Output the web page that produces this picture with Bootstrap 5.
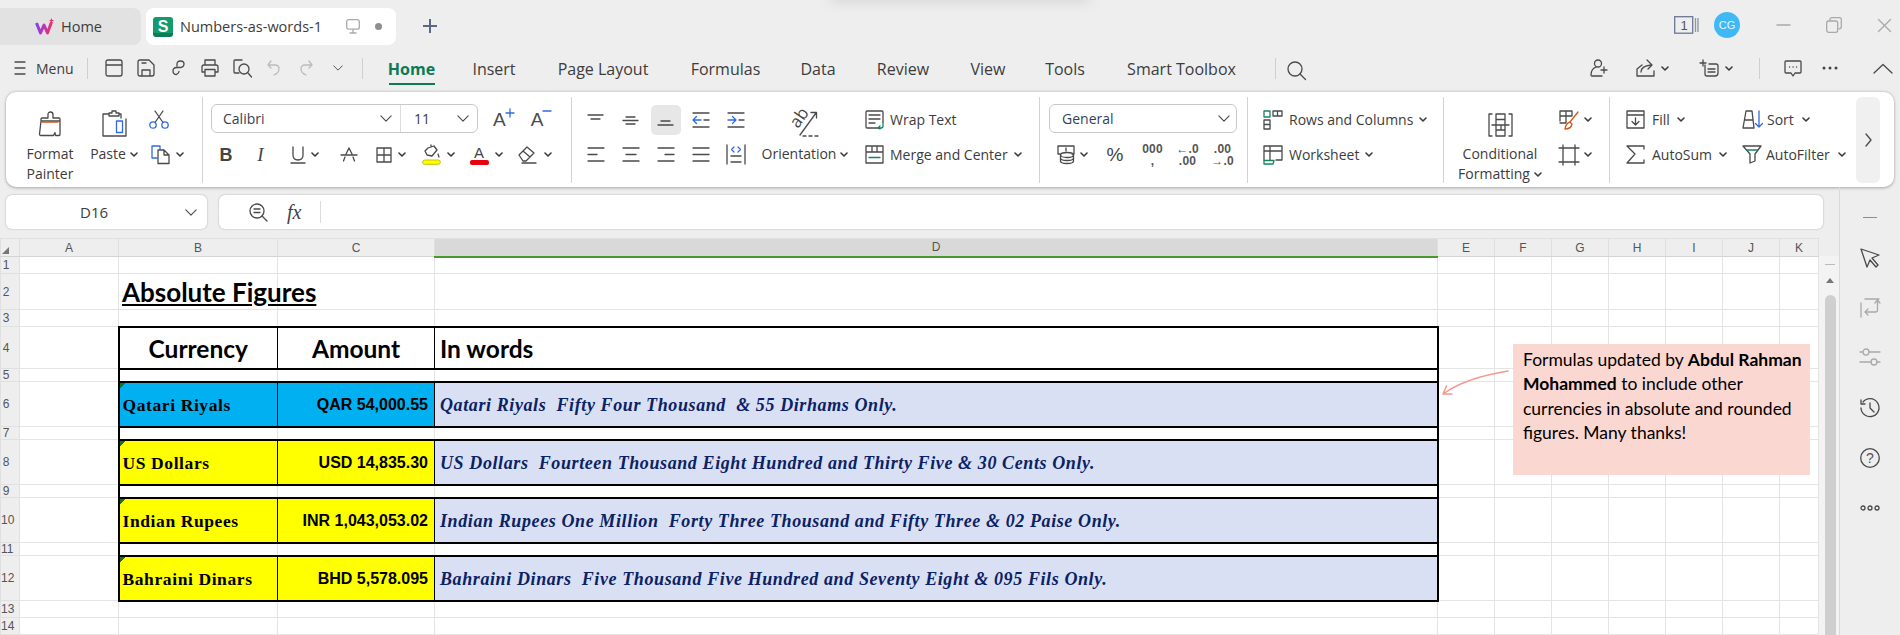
<!DOCTYPE html>
<html lang="en">
<head>
<meta charset="UTF-8">
<title>Numbers-as-words-1</title>
<meta name="viewport" content="width=device-width, initial-scale=1">
<link rel="stylesheet" href="https://cdn.jsdelivr.net/npm/bootstrap@5.3.0/dist/css/bootstrap.min.css">
<style>
  html, body { margin: 0; height: 635px; overflow: hidden; }
  body { background: #eeeeee; color: #3c3c3c; font-family: "Open Sans", "Noto Sans", sans-serif; font-size: 14px; position: relative; }
  svg { display: block; flex: none; overflow: visible; }
  .ln { fill: none; stroke: #4a4a4a; stroke-width: 1.3; stroke-linecap: round; stroke-linejoin: round; }
  .ln-b { fill: none; stroke: #2f6be0; stroke-width: 1.3; stroke-linecap: round; stroke-linejoin: round; }
  .ln-g { fill: none; stroke: #17855c; stroke-width: 1.3; stroke-linecap: round; stroke-linejoin: round; }
  .ln-o { fill: none; stroke: #d2571e; stroke-width: 1.3; stroke-linecap: round; stroke-linejoin: round; }
  .ln-off { fill: none; stroke: #bcbcbc; stroke-width: 1.3; stroke-linecap: round; stroke-linejoin: round; }
  .ln-soft { fill: none; stroke: #a9a9a9; stroke-width: 1.3; stroke-linecap: round; stroke-linejoin: round; }
  .car { fill: none; stroke: #3c3c3c; stroke-width: 1.6; stroke-linecap: round; stroke-linejoin: round; width: 8px; height: 5px; }

  /* tab strip */
  .tab-strip { height: 50px; padding-top: 8px; }
  .doc-tab { height: 37px; font-size: 14.5px; }
  .tab-home { width: 141px; background: #e2e2e2; border-radius: 0 8px 8px 0; padding-left: 35px; gap: 7px; }
  .tab-file { width: 250px; background: #fff; border-radius: 8px; margin-left: 5px; padding-left: 7px; }
  .file-badge { width: 20px; height: 20px; border-radius: 3px; background: linear-gradient(#149a6b 80%, #0d7d55 80%); color: #fff; font: 700 16px/19px "Liberation Sans", sans-serif; text-align: center; margin-right: 7px; }
  .file-name { width: 166px; white-space: nowrap; }
  .file-dot { width: 7px; height: 7px; border-radius: 50%; background: #8e8e8e; margin-left: 15px; }
  .tab-plus { margin-left: 27px; margin-top: 11px; }
  .book-no { margin-left: auto; width: 25px; margin-top: 8px; }
  .book-digit { font: 13px/18px "Liberation Sans", sans-serif; fill: #555; }
  .user-dot { width: 26px; height: 26px; border-radius: 50%; background: #40b8f5; color: #e9f7ff; font: 11px/26px "Liberation Sans", sans-serif; text-align: center; margin-left: 15px; }
  .win-btns { gap: 36px; margin-left: 37px; margin-right: 9px; margin-top: 9px; }
  .top-smudge { position: absolute; left: 830px; top: -6px; width: 260px; height: 6px; box-shadow: 0 0 14px rgba(0,0,0,.18); }

  /* menu row */
  .menu-row { height: 42px; padding-bottom: 6px; }
  .menu-btn { margin-left: 15px; gap: 11px; font-size: 14px; width: 72px; }
  .vsep { width: 1px; height: 21px; background: #cfcfcf; flex: none; }
  .quick-bar { display: grid; grid-template-columns: 49px 35px 29px 32px 34px 33px 33px 29px; }
  .qb-folder { padding-left: 17px; }
  .tab-list.nav { display: grid; grid-template-columns: 87px 78px 140px 105px 80px 90px 80px 74px 159px; flex-wrap: nowrap; margin-left: 5px; margin-top: 2px; }
  .tab-list .nav-link { padding: 0; color: #3c3c3c; font-size: 16px; text-align: center; line-height: 24px; white-space: nowrap; }
  .tab-list .nav-link.active { color: #0b7a55; font-weight: 700; position: relative; }
  .tab-list .nav-link.active::after { content: ""; position: absolute; left: 21px; right: 20px; top: 26px; height: 2px; background: #0b7a55; }
  .sep-search { margin-left: 14px; }
  .search-ico { margin-left: 11px; margin-top: 4px; }
  .share-bar { margin-left: auto; margin-right: 8px; }
  .sb-user { margin-right: 28px; }
  .sb-share { gap: 5px; margin-right: 31px; }
  .sb-note { gap: 6px; }
  .sep-share { margin-left: 26px; margin-right: 24px; }
  .sb-dots { margin-left: 19px; margin-right: 35px; width: 18px; }

  /* ribbon */
  .ribbon { height: 95px; margin: 0 6px; background: #fff; border-radius: 10px; padding: 5px 0 4px; box-shadow: 0 0 3px rgba(0,0,0,.28), 0 2px 3px rgba(0,0,0,.12); }
  .rgroup { height: 86px; border-right: 1px solid #d2d2d2; flex: none; }
  .rg1 { width: 197px; padding-left: 6px; }
  .rg2 { width: 369px; padding-left: 8px; padding-top: 5px; }
  .rg3 { width: 468px; padding-left: 6px; padding-top: 5px; }
  .rg4 { width: 208px; padding-left: 9px; padding-top: 5px; }
  .rg5 { width: 196px; padding-left: 15px; padding-top: 5px; }
  .rg6 { width: 166px; }
  .rg7 { width: 246px; padding-left: 16px; padding-top: 5px; border-right: 0; }
  .rrow { height: 35px; white-space: nowrap; }
  .big-btn { padding-top: 15px; line-height: 20px; text-align: center; white-space: nowrap; }
  .big-ico { height: 25px; margin-bottom: 7px; }
  .fmt-col { width: 76px; }
  .paste-col { width: 52px; }
  .clip-col { padding-top: 5px; margin-left: 6px; }
  .clip-cut { padding-left: 3px; }
  .clip-copy { padding-left: 5px; gap: 5px; }
  .ribbon-scroll { width: 24px; height: 86px; background: #f0f0f0; border-radius: 6px; }
  .combo { height: 29px; border: 1px solid #c9c9c9; border-radius: 6px; margin-top: -2px; background: #fff; }
  .combo-font { width: 189px; padding: 0 8px 0 11px; border-right: 1px solid #dcdcdc; color: #333f55; }
  .combo-size { width: 76px; padding: 0 8px 0 13px; }
  .grow-a { margin-left: 15px; }
  .shrink-a { margin-left: 17px; }
  .size-a { font: 19px/22px "Liberation Sans", sans-serif; color: #4a4a4a; }
  .font-row { display: grid; grid-template-columns: 30px 39px 50px 38px 46px 48px 48px 50px; }
  .fcell { gap: 6px; }
  .txt-b { font: 700 18px/20px "Liberation Sans", sans-serif; color: #444; }
  .txt-i { font: italic 19px/20px "Liberation Serif", serif; color: #444; }
  .txt-color { font: 15px/15px "Liberation Sans", sans-serif; color: #444; text-align: center; }
  .color-bar { display: block; width: 19px; height: 5px; border-radius: 2px; background: #e60012; }
  .align-grid { display: grid; grid-template-columns: repeat(5, 35px); grid-auto-rows: 35px; }
  .align-on { width: 30px; height: 30px; background: #e7e7e7; border-radius: 5px; }
  .orient-col { width: 104px; margin-top: -5px; }
  .orient-txt { font: 17px/18px "Open Sans", sans-serif; fill: #444; }
  .orient-label { gap: 4px; }
  .wrap-col { padding-left: 8px; }
  .wrap-item { gap: 6px; }
  .num-select { width: 188px; padding: 0 6px 0 12px; color: #333f55; }
  .num-row { display: grid; grid-template-columns: 46px 40px 35px 35px 35px; }
  .coin-cell { gap: 5px; }
  .pct { font: 19px/22px "Liberation Sans", sans-serif; color: #444; }
  .dec { font: 700 12px/12px "Liberation Sans", sans-serif; color: #555; text-align: center; letter-spacing: .2px; }
  .rc-item { gap: 6px; }
  .cond-col { width: 112px; }
  .cond-tools { margin-left: 3px; padding-top: 5px; }
  .cond-tool { gap: 5px; }
  .edit-a { width: 116px; }
  .edit-item { gap: 7px; }

  /* formula bar */
  .work-area { height: 448px; }
  .sheet-side { width: 1839px; }
  .fx-row { height: 34px; margin: 8px 0 9px 6px; }
  .name-box { width: 201px; background: #fff; border-radius: 6px; box-shadow: 0 0 2px rgba(0,0,0,.3); font-size: 15px; padding: 0 10px 0 74px; }
  .fx-box { width: 1604px; margin-left: 12px; background: #fff; border-radius: 6px; box-shadow: 0 0 2px rgba(0,0,0,.3); padding-left: 30px; }
  .fx-txt { font: italic 20px/22px "Liberation Serif", serif; color: #444; margin-left: 19px; width: 33px; }
  .fx-sep { width: 1px; height: 22px; background: #dcdcdc; }

  /* sheet grid */
  .sheet-wrap { position: relative; height: 397px; overflow: hidden; }
  .sheet-grid.table { width: 1818px; table-layout: fixed; margin: 0; flex: none; border-collapse: collapse; }
  .cw-rh { width: 19px; } .cw-a { width: 99px; } .cw-b { width: 159px; } .cw-c { width: 157px; } .cw-d { width: 1003px; }
  .cw-e { width: 57px; } .cw-f { width: 57px; } .cw-k { width: 39px; }
  .sheet-grid.table > * > tr > * { padding: 0; background-color: #fff; color: #000; border: 1px solid #e4e4e4; box-shadow: none; overflow: visible; white-space: nowrap; vertical-align: middle; }
  .sheet-grid.table > thead > tr > th { height: 18px; background-color: #eee; font: 12px/16px "Liberation Sans", sans-serif; color: #555; text-align: center; border-color: #e0e0e0; border-bottom-color: #d4d4d4; }
  .sheet-grid.table > thead > tr > th.col-on { background-color: #d9d9d9; border-bottom: 2px solid #4a9a2b; }
  .corner-mark { margin: 6px 0 0 1px; }
  .sheet-grid.table > tbody > tr > th { background-color: #eee; font: 12px/12px "Liberation Sans", sans-serif; font-weight: 400; color: #555; text-align: center; padding-right: 8px; border-color: #e0e0e0; }
  .r17 { height: 17px; } .r36 { height: 36px; } .r42 { height: 42px; } .r12 { height: 12px; } .r13 { height: 13px; } .r45 { height: 45px; }
  .sheet-grid.table > tbody > tr > td.sheet-title { font: 700 26px/30px Lato, sans-serif; text-decoration: underline; padding-left: 3px; }
  .sheet-grid.table > tbody > tr > td.hd-cell { font: 700 24.5px/30px Lato, sans-serif; text-align: center; padding-top: 2px; }
  .sheet-grid.table > tbody > tr > td.hd-left { text-align: left; padding-left: 5px; }
  .sheet-grid.table > tbody > tr > td.cur-name { font: 700 17.5px/18px "Liberation Serif", serif; letter-spacing: .6px; padding-left: 3px; padding-top: 2px; background-image: linear-gradient(135deg, #14722e 4px, transparent 4px); }
  .sheet-grid.table > tbody > tr > td.amt { font: 700 16px/18px "Liberation Sans", sans-serif; text-align: right; padding-right: 6px; padding-top: 2px; }
  .sheet-grid.table > tbody > tr > td.words { font: italic 700 18px/18px "Liberation Serif", serif; letter-spacing: .6px; color: #0b2266; background-color: #dae0f3; padding-left: 5px; padding-top: 2px; white-space: pre; }
  .sheet-grid.table > tbody > tr > td.fill-blue { background-color: #00b0f0; }
  .sheet-grid.table > tbody > tr > td.fill-yel { background-color: #ffff00; }
  .sheet-grid.table > tbody > tr > td.bx-t { border-top: 2px solid #000; }
  .sheet-grid.table > tbody > tr > td.bx-b { border-bottom: 2px solid #000; }
  .sheet-grid.table > tbody > tr > td.bx-l { border-left: 2px solid #000; }
  .sheet-grid.table > tbody > tr > td.bx-r { border-right: 2px solid #000; }
  .sheet-grid.table > tbody > tr > td.bx-v { border-right: 1px solid #000; }
  .note-box { position: absolute; left: 1513px; top: 106px; width: 297px; height: 131px; background: #fbd7d1; color: #000; padding: 4px 8px 0 10px; font: 17.5px/24.4px Lato, sans-serif; white-space: nowrap; }
  .note-arrow { position: absolute; left: 1440px; top: 131px; }
  .vscroll { width: 21px; height: 397px; background: #f3f3f3; flex: none; }
  .vscroll-head { height: 18px; background: #eee; }
  .vscroll-dash { width: 10px; height: 1px; background: #bbb; margin: 8px auto 0; }
  .vscroll-up { margin: 13px auto 0; }
  .vscroll-thumb { width: 11px; height: 400px; margin: 12px 0 0 6px; background: #cfcfcf; border-radius: 6px; }

  /* side panel */
  .side-panel { width: 61px; border-left: 1px solid #dadada; padding-top: 30px; }
  .side-cell { height: 50px; }
  .side-cell-dots { padding-top: 7px; }
  .side-dash { width: 14px; height: 1px; background: #8c8c8c; margin-bottom: 30px; }
  .help-q { font: 14px/20px "Liberation Sans", sans-serif; fill: #555; }
</style>
</head>
<body>
<svg width="0" height="0" class="position-absolute">
  <symbol id="caret" viewBox="0 0 8 5"><path d="M1 1l3 3 3-3"/></symbol>
  <symbol id="chev" viewBox="0 0 14 8"><path d="M1 1l6 6 6-6"/></symbol>
</svg>
<div class="top-smudge"></div>

<!-- tabs -->
<div class="tab-strip d-flex align-items-start">
  <div class="doc-tab tab-home d-flex align-items-center">
    <svg width="19" height="18" viewBox="0 0 19 18">
      <defs><linearGradient id="wlogo" x1="0" x2="1"><stop offset="0" stop-color="#8a3cf0"/><stop offset="1" stop-color="#f0306e"/></linearGradient></defs>
      <path d="M1.5 5l4 10 3.5-8 3.500 8 4-11" fill="none" stroke="url(#wlogo)" stroke-width="3" stroke-linejoin="round"/>
      <path d="M16.500 0l.7 1.800 1.800.7-1.800.7-.7 1.800-.7-1.800-1.800-.7 1.800-.7z" fill="#f0306e"/>
    </svg>
    <span>Home</span>
  </div>
  <div class="doc-tab tab-file d-flex align-items-center">
    <div class="file-badge">S</div>
    <div class="file-name">Numbers-as-words-1</div>
    <svg width="14" height="15" viewBox="0 0 14 15"><rect class="ln-soft" x=".7" y=".7" width="12.600" height="9.500" rx="2"/><path class="ln-soft" d="M7 10.500v3M4 14h6"/></svg>
    <div class="file-dot"></div>
  </div>
  <svg class="tab-plus" width="14" height="14" viewBox="0 0 14 14"><path d="M7 0v14M0 7h14" stroke="#5a6785" stroke-width="2" fill="none"/></svg>
  <svg class="book-no" height="18" viewBox="0 0 25 18"><rect x=".7" y=".7" width="18" height="16.500" fill="none" stroke="#6b7893" stroke-width="1.300"/><text class="book-digit" x="6.500" y="14">1</text><path d="M21.500 2v14M24 2v14" stroke="#8b96aa" stroke-width="1.300"/></svg>
  <div class="user-dot mt-1">CG</div>
  <div class="win-btns d-flex align-items-center">
    <svg width="13" height="14" viewBox="0 0 13 14"><path class="ln-soft" d="M0 7h13"/></svg>
    <svg width="16" height="16" viewBox="0 0 16 16"><rect class="ln-soft" x=".7" y="4" width="11" height="11.300" rx="2"/><path class="ln-soft" d="M4 3V2.500Q4 .7 6 .7h7.500q1.800 0 1.800 1.800v7.500q0 1.800-2.300 1.800"/></svg>
    <svg width="13" height="13" viewBox="0 0 13 13"><path class="ln-soft" d="M.5.500l12 12M12.500.500l-12 12"/></svg>
  </div>
</div>

<!-- menu row -->
<div class="menu-row d-flex align-items-center">
  <div class="menu-btn d-flex align-items-center">
    <svg width="10" height="14" viewBox="0 0 10 14"><path class="ln" d="M0 1h10M0 7h10M0 13h10"/></svg>
    <span>Menu</span>
  </div>
  <div class="vsep"></div>
  <div class="quick-bar align-items-center">
    <div class="qb-folder"><svg width="18" height="18" viewBox="0 0 18 18"><path class="ln" d="M1 3q0-2 2-2h12q2 0 2 2v12q0 2-2 2H3q-2 0-2-2zM1 6h16"/></svg></div>
    <div><svg width="18" height="18" viewBox="0 0 18 18"><path class="ln" d="M1 3q0-2 2-2h9l5 5v9q0 2-2 2H3q-2 0-2-2zM5 17v-6h8v6M5 4h4"/></svg></div>
    <div><svg width="15" height="16" viewBox="0 0 15 16"><path class="ln" d="M5 6V4q0-3 3.500-3T12 4t-3.500 3.500h-4Q1 7.500 1 11t3.500 3.500S7 13 7 11.500"/></svg></div>
    <div><svg width="18" height="18" viewBox="0 0 18 18"><path class="ln" d="M4 6V1h10v5M4 13H1V8q0-2 2-2h12q2 0 2 2v5h-3M4 10.500h10V17H4z"/></svg></div>
    <div><svg width="19" height="19" viewBox="0 0 19 19"><path class="ln" d="M6 14H2q-1 0-1-1V2q0-1 1-1h7"/><circle class="ln" cx="11" cy="10" r="5"/><path class="ln" d="M15 14l3.500 4"/></svg></div>
    <div><svg width="13" height="16" viewBox="0 0 13 16"><path class="ln-off" d="M4 1L1 5l3 3M1 5h7q4 0 4 4t-5 6"/></svg></div>
    <div><svg width="13" height="16" viewBox="0 0 13 16"><path class="ln-off" d="M9 1l3 4-3 3M12 5H5Q1 5 1 9t5 6"/></svg></div>
    <div><svg class="ln" width="10" height="6"><use href="#chev"/></svg></div>
  </div>
  <div class="vsep"></div>
  <ul class="nav tab-list">
    <li class="nav-item"><a class="nav-link active" href="#">Home</a></li>
    <li class="nav-item"><a class="nav-link" href="#">Insert</a></li>
    <li class="nav-item"><a class="nav-link" href="#">Page Layout</a></li>
    <li class="nav-item"><a class="nav-link" href="#">Formulas</a></li>
    <li class="nav-item"><a class="nav-link" href="#">Data</a></li>
    <li class="nav-item"><a class="nav-link" href="#">Review</a></li>
    <li class="nav-item"><a class="nav-link" href="#">View</a></li>
    <li class="nav-item"><a class="nav-link" href="#">Tools</a></li>
    <li class="nav-item"><a class="nav-link" href="#">Smart Toolbox</a></li>
  </ul>
  <div class="vsep sep-search"></div>
  <svg class="search-ico" width="19" height="19" viewBox="0 0 19 19"><circle class="ln" cx="8" cy="8" r="7"/><path class="ln" d="M13 13l5.500 5.500"/></svg>
  <div class="share-bar d-flex align-items-center">
    <svg class="sb-user" width="18" height="18" viewBox="0 0 18 18"><circle class="ln" cx="8" cy="4.500" r="3.500"/><path class="ln" d="M6 8Q1 10 1 16q0 1 1 1h10M14 8v6M11 11h6"/></svg>
    <div class="sb-share d-flex align-items-center">
      <svg width="20" height="18" viewBox="0 0 20 18"><path class="ln" d="M1 17V10L6 6M1 17h17v-5M5 13q0-6 10-7M11 1l5 5-4 4"/></svg>
      <svg class="car"><use href="#caret"/></svg>
    </div>
    <div class="sb-note d-flex align-items-center">
      <svg width="19" height="18" viewBox="0 0 19 18"><path class="ln" d="M5 6v9q0 2 2 2h8q3 0 3-3V7q0-2-2-2H9M8 10h7M8 13h7M3 1v6M0 4h6"/></svg>
      <svg class="car"><use href="#caret"/></svg>
    </div>
    <div class="vsep sep-share"></div>
    <svg width="18" height="17" viewBox="0 0 18 17"><path class="ln" d="M2 1h14q1 0 1 1v10q0 1-1 1h-5l-2 3-2-3H2q-1 0-1-1V2q0-1 1-1z"/><path class="ln" d="M5.500 7h.1M9 7h.1M12.500 7h.1"/></svg>
    <svg class="sb-dots" height="4" viewBox="0 0 18 4"><circle cx="3" cy="2" r="1.500" fill="#444"/><circle cx="9" cy="2" r="1.500" fill="#444"/><circle cx="15" cy="2" r="1.500" fill="#444"/></svg>
    <svg width="18" height="9" viewBox="0 0 18 9"><path class="ln" d="M0 9L9 .500 18 9"/></svg>
  </div>
</div>

<!-- ribbon -->
<div class="ribbon d-flex">
  <!-- clipboard -->
  <div class="rgroup rg1 d-flex">
    <div class="big-btn fmt-col">
      <div class="big-ico d-flex justify-content-center align-items-end">
        <svg width="24" height="26" viewBox="0 0 24 26"><path class="ln" d="M10 7V3.500Q10 1 12.500 1T15 3.500V7h6q1 0 1 1v2H3V8q0-1 1-1zM3 10L1.500 23q0 1.500 1 1.500h13l1.500-3 .5 3H21q1 0 1-1V10"/><path class="ln-o" d="M4 11h16"/></svg>
      </div>
      Format<br>Painter
    </div>
    <div class="big-btn paste-col">
      <div class="big-ico d-flex justify-content-center align-items-end">
        <svg width="26" height="27" viewBox="0 0 26 27"><path class="ln" d="M7 4H2v22h12M8 6V3h3V1h4v2h3v3zM19 4h1v4M15 26h10V9"/><rect class="ln-b" x="15.500" y="11" width="6" height="11.500"/></svg>
      </div>
      <div class="d-flex align-items-center justify-content-center gap-1">Paste <svg class="car"><use href="#caret"/></svg></div>
    </div>
    <div class="clip-col">
      <div class="rrow clip-cut d-flex align-items-center">
        <svg width="20" height="18" viewBox="0 0 20 18"><path class="ln" d="M6 11.500L14 0M14 11.500L6 0"/><circle class="ln-b" cx="4" cy="14" r="3.200"/><circle class="ln-b" cx="16" cy="14" r="3.200"/></svg>
      </div>
      <div class="rrow clip-copy d-flex align-items-center">
        <svg width="20" height="19" viewBox="0 0 20 19"><path class="ln-b" d="M6 13H1V1h8v3"/><path class="ln" d="M7 5h6l5 5v8.500H7zM13 5v5h5"/></svg>
        <svg class="car"><use href="#caret"/></svg>
      </div>
    </div>
  </div>

  <!-- font -->
  <div class="rgroup rg2">
    <div class="rrow d-flex align-items-center">
      <div class="combo d-flex">
        <div class="combo-font d-flex align-items-center justify-content-between"><span>Calibri</span><svg class="ln" width="12" height="7"><use href="#chev"/></svg></div>
        <div class="combo-size d-flex align-items-center justify-content-between"><span>11</span><svg class="ln" width="12" height="7"><use href="#chev"/></svg></div>
      </div>
      <div class="grow-a d-flex size-a">A<svg width="8" height="8" viewBox="0 0 8 8"><path class="ln-b" d="M4 0v8M0 4h8"/></svg></div>
      <div class="shrink-a d-flex size-a">A<svg width="8" height="8" viewBox="0 0 8 8"><path class="ln-b" d="M0 2h8"/></svg></div>
    </div>
    <div class="rrow font-row">
      <div class="d-flex align-items-center justify-content-center txt-b">B</div>
      <div class="d-flex align-items-center justify-content-center txt-i">I</div>
      <div class="fcell d-flex align-items-center justify-content-center"><svg width="14" height="18" viewBox="0 0 14 18"><path class="ln" d="M2 1v8q0 5 5 5t5-5V1M0 17h14"/></svg><svg class="car"><use href="#caret"/></svg></div>
      <div class="d-flex align-items-center justify-content-center"><svg width="16" height="15" viewBox="0 0 16 15"><path class="ln" d="M8 1L5 7M8 1l3 6M0 8h16M4 10l-1.500 4M12 10l1.500 4"/></svg></div>
      <div class="fcell d-flex align-items-center justify-content-center"><svg width="16" height="16" viewBox="0 0 16 16"><path class="ln" d="M1 1h14v14H1zM8 1v14M1 8h14"/></svg><svg class="car"><use href="#caret"/></svg></div>
      <div class="fcell d-flex align-items-center justify-content-center"><svg width="19" height="20" viewBox="0 0 19 20"><path class="ln" d="M6 3l6-2 3 4-5 6-5-1-2-4zM9 1V0M16 9l1 3"/><rect x=".7" y="15" width="17.600" height="4.300" rx="2" fill="#ffff00" stroke="#c7bf00"/></svg><svg class="car"><use href="#caret"/></svg></div>
      <div class="fcell d-flex align-items-center justify-content-center"><div class="txt-color">A<span class="color-bar"></span></div><svg class="car"><use href="#caret"/></svg></div>
      <div class="fcell d-flex align-items-center justify-content-center"><svg width="20" height="18" viewBox="0 0 20 18"><path class="ln" d="M1 9l8-8 7 6-8 8H5zM5 5l7 6M4 17h14"/></svg><svg class="car"><use href="#caret"/></svg></div>
    </div>
  </div>

  <!-- alignment -->
  <div class="rgroup rg3 d-flex">
    <div class="align-grid">
      <div class="d-flex align-items-center justify-content-center"><svg width="15" height="14" viewBox="0 0 15 14"><path class="ln" d="M0 2h15M3 6h9"/></svg></div>
      <div class="d-flex align-items-center justify-content-center"><svg width="15" height="14" viewBox="0 0 15 14"><path class="ln" d="M3 4h9M0 7.500h15M3 11h9"/></svg></div>
      <div class="d-flex align-items-center justify-content-center"><div class="align-on d-flex align-items-center justify-content-center"><svg width="15" height="14" viewBox="0 0 15 14"><path class="ln" d="M3 8h9M0 12h15"/></svg></div></div>
      <div class="d-flex align-items-center justify-content-center"><svg width="16" height="16" viewBox="0 0 16 16"><path class="ln" d="M0 1h16M0 15h16M11 8h5"/><path class="ln-b" d="M0 8h8M3.500 4.500L0 8l3.500 3.500"/></svg></div>
      <div class="d-flex align-items-center justify-content-center"><svg width="16" height="16" viewBox="0 0 16 16"><path class="ln" d="M0 1h16M0 15h16M11 8h5"/><path class="ln-b" d="M0 8h8M4.500 4.500L8 8l-3.500 3.500"/></svg></div>
      <div class="d-flex align-items-center justify-content-center"><svg width="16" height="15" viewBox="0 0 16 15"><path class="ln" d="M0 1h16M0 7.500h9M0 14h16"/></svg></div>
      <div class="d-flex align-items-center justify-content-center"><svg width="16" height="15" viewBox="0 0 16 15"><path class="ln" d="M0 1h16M3 7.500h10M0 14h16"/></svg></div>
      <div class="d-flex align-items-center justify-content-center"><svg width="16" height="15" viewBox="0 0 16 15"><path class="ln" d="M0 1h16M7 7.500h9M0 14h16"/></svg></div>
      <div class="d-flex align-items-center justify-content-center"><svg width="16" height="15" viewBox="0 0 16 15"><path class="ln" d="M0 1h16M0 7.500h16M0 14h16"/></svg></div>
      <div class="d-flex align-items-center justify-content-center"><svg width="20" height="19" viewBox="0 0 20 19"><path class="ln" d="M1 0v19M19 0v19M5 11h10M5 17h10"/><path class="ln-b" d="M8 2L5.500 4.500 8 7M12 2l2.500 2.500L12 7"/></svg></div>
    </div>
    <div class="orient-col big-btn">
      <div class="big-ico d-flex justify-content-center align-items-end">
        <svg width="28" height="28" viewBox="0 0 28 28"><text class="orient-txt" transform="translate(7 20) rotate(-55)" x="0" y="0">ab</text><path class="ln" d="M9 26L25 4M20 3.500h5.500V9M12 27h3M18 27h3M24 27h3"/></svg>
      </div>
      <div class="orient-label d-flex align-items-center justify-content-center">Orientation <svg class="car"><use href="#caret"/></svg></div>
    </div>
    <div class="wrap-col">
      <div class="rrow wrap-item d-flex align-items-center">
        <svg width="19" height="19" viewBox="0 0 19 19"><path class="ln" d="M14 18H2q-1 0-1-1V2q0-1 1-1h15q1 0 1 1v10M4 5h11M4 9h11M4 13h6"/><path class="ln-g" d="M18 12v4q0 2-2 2h-3M15 16l-2 2 2 1"/></svg>
        <span>Wrap Text</span>
      </div>
      <div class="rrow wrap-item d-flex align-items-center">
        <svg width="19" height="19" viewBox="0 0 19 19"><path class="ln" d="M1 1h17v17H1zM1 7h17M7 1v6M12 1v6"/><path class="ln-g" d="M4 12.500h11"/></svg>
        <span>Merge and Center</span>
        <svg class="car"><use href="#caret"/></svg>
      </div>
    </div>
  </div>

  <!-- number -->
  <div class="rgroup rg4">
    <div class="rrow d-flex align-items-center">
      <div class="combo num-select d-flex align-items-center justify-content-between"><span>General</span><svg class="ln" width="12" height="7"><use href="#chev"/></svg></div>
    </div>
    <div class="rrow num-row">
      <div class="coin-cell d-flex align-items-center justify-content-center">
        <svg width="18" height="19" viewBox="0 0 18 19"><path class="ln" d="M3 9H1V1h16v8h-2M9 3v3"/><ellipse class="ln" cx="10" cy="10" rx="6.500" ry="2.500"/><path class="ln" d="M3.500 10v6q0 2.500 6.500 2.500t6.500-2.500v-6M3.500 13q0 2.500 6.500 2.500t6.500-2.500"/></svg>
        <svg class="car"><use href="#caret"/></svg>
      </div>
      <div class="pct d-flex align-items-center justify-content-center">%</div>
      <div class="dec d-flex align-items-center justify-content-center"><span>000<br>,</span></div>
      <div class="dec d-flex align-items-center justify-content-center"><span>←.0<br>.00</span></div>
      <div class="dec d-flex align-items-center justify-content-center"><span>.00<br>→.0</span></div>
    </div>
  </div>

  <!-- rows and columns -->
  <div class="rgroup rg5">
    <div class="rrow rc-item d-flex align-items-center">
      <svg width="20" height="20" viewBox="0 0 20 20"><path class="ln-g" d="M1 1h6v6H1z"/><path class="ln" d="M10 1h9v5h-9zM14.500 1v5M1 10h6v9H1zM1 14.500h6"/></svg>
      <span>Rows and Columns</span>
      <svg class="car"><use href="#caret"/></svg>
    </div>
    <div class="rrow rc-item d-flex align-items-center">
      <svg width="20" height="20" viewBox="0 0 20 20"><path class="ln" d="M1 15V1h18v14h-6M1 6h18M7 1v14"/><path class="ln-g" d="M1 15.500h10l-1 3.500H1z"/></svg>
      <span>Worksheet</span>
      <svg class="car"><use href="#caret"/></svg>
    </div>
  </div>

  <!-- styles -->
  <div class="rgroup rg6 d-flex">
    <div class="big-btn cond-col">
      <div class="big-ico d-flex justify-content-center align-items-end">
        <svg width="25" height="24" viewBox="0 0 25 24"><path class="ln" d="M4 1H1v22h3M21 1h3v22h-3M8 1h9v22H8zM8 6.500h9M4 12h17M13 12v5M8 17h9"/></svg>
      </div>
      <div class="d-flex flex-column align-items-center">
        <span>Conditional</span>
        <span class="d-flex align-items-center gap-1">Formatting <svg class="car"><use href="#caret"/></svg></span>
      </div>
    </div>
    <div class="cond-tools">
      <div class="rrow cond-tool d-flex align-items-center">
        <svg width="20" height="20" viewBox="0 0 20 20"><path class="ln" d="M1 11V1h12v5M1 6h12M7 1v12H1"/><path class="ln-o" d="M19 2l-8 10M6 19q1-6 5-7l2 2q-1 5-7 5z"/></svg>
        <svg class="car"><use href="#caret"/></svg>
      </div>
      <div class="rrow cond-tool d-flex align-items-center">
        <svg width="20" height="20" viewBox="0 0 20 20"><path class="ln" d="M4 0v20M16 0v20M0 3h20M0 17h20"/></svg>
        <svg class="car"><use href="#caret"/></svg>
      </div>
    </div>
  </div>

  <!-- editing -->
  <div class="rgroup rg7 d-flex">
    <div class="edit-a">
      <div class="rrow edit-item d-flex align-items-center">
        <svg width="19" height="19" viewBox="0 0 19 19"><path class="ln" d="M1 1h17v4H1zM1 5v13h17V5M9.500 8v7M6 11.500l3.500 3.500 3.500-3.500"/></svg>
        <span>Fill</span><svg class="car"><use href="#caret"/></svg>
      </div>
      <div class="rrow edit-item d-flex align-items-center">
        <svg width="19" height="19" viewBox="0 0 19 19"><path class="ln" d="M18 4V1H1l8 8-8 9h17v-3"/></svg>
        <span>AutoSum</span><svg class="car"><use href="#caret"/></svg>
      </div>
    </div>
    <div>
      <div class="rrow d-flex align-items-center gap-1">
        <svg width="21" height="19" viewBox="0 0 21 19"><path class="ln" d="M4 1h6l2 17H1zM3 10h7.500"/><path class="ln-b" d="M17 1v16M13.500 13.500L17 17l3.500-3.500"/></svg>
        <span>Sort</span><svg class="car ms-1"><use href="#caret"/></svg>
      </div>
      <div class="rrow d-flex align-items-center gap-1">
        <svg width="20" height="19" viewBox="0 0 20 19"><path class="ln" d="M1 1h18l-6 8v7l-5 2V9z"/><path class="ln-g" d="M4.500 5h11"/></svg>
        <span>AutoFilter</span><svg class="car ms-1"><use href="#caret"/></svg>
      </div>
    </div>
  </div>
  <div class="ribbon-scroll d-flex align-items-center justify-content-center">
    <svg width="7" height="14" viewBox="0 0 7 14"><path class="ln" d="M1 1l5 6-5 6"/></svg>
  </div>
</div>

<div class="work-area d-flex">
  <div class="sheet-side">
    <!-- formula bar -->
    <div class="fx-row d-flex">
      <div class="name-box d-flex align-items-center justify-content-between"><span>D16</span><svg class="ln" width="12" height="7"><use href="#chev"/></svg></div>
      <div class="fx-box d-flex align-items-center">
        <svg width="19" height="19" viewBox="0 0 19 19"><circle class="ln" cx="8" cy="8" r="7"/><path class="ln" d="M13 13l5 5M5 6h6M5 9.500h6"/></svg>
        <span class="fx-txt">fx</span>
        <div class="fx-sep"></div>
      </div>
    </div>
    <!-- sheet -->
    <div class="sheet-wrap d-flex">
      <table class="table sheet-grid">
        <colgroup>
          <col class="cw-rh"><col class="cw-a"><col class="cw-b"><col class="cw-c"><col class="cw-d"><col class="cw-e"><col class="cw-f"><col class="cw-f"><col class="cw-f"><col class="cw-f"><col class="cw-f"><col class="cw-k">
        </colgroup>
        <thead>
          <tr><th><svg class="corner-mark" width="7" height="7" viewBox="0 0 7 7"><path d="M7 0v7H0z" fill="#777"/></svg></th><th>A</th><th>B</th><th>C</th><th class="col-on">D</th><th>E</th><th>F</th><th>G</th><th>H</th><th>I</th><th>J</th><th>K</th></tr>
        </thead>
        <tbody>
          <tr class="r17"><th>1</th><td></td><td></td><td></td><td></td><td></td><td></td><td></td><td></td><td></td><td></td><td></td></tr>
          <tr class="r36"><th>2</th><td></td><td class="sheet-title">Absolute Figures</td><td></td><td></td><td></td><td></td><td></td><td></td><td></td><td></td><td></td></tr>
          <tr class="r17"><th>3</th><td></td><td></td><td></td><td></td><td></td><td></td><td></td><td></td><td></td><td></td><td></td></tr>
          <tr class="r42"><th>4</th><td></td><td class="hd-cell bx-t bx-b bx-l bx-v">Currency</td><td class="hd-cell bx-t bx-b bx-v">Amount</td><td class="hd-cell hd-left bx-t bx-b bx-r">In words</td><td></td><td></td><td></td><td></td><td></td><td></td><td></td></tr>
          <tr class="r12"><th>5</th><td></td><td class="bx-l"></td><td></td><td class="bx-r"></td><td></td><td></td><td></td><td></td><td></td><td></td><td></td></tr>
          <tr class="r45"><th>6</th><td></td><td class="cur-name fill-blue bx-t bx-b bx-l bx-v">Qatari Riyals</td><td class="amt fill-blue bx-t bx-b bx-v">QAR 54,000.55</td><td class="words bx-t bx-b bx-r">Qatari Riyals  Fifty Four Thousand  &amp; 55 Dirhams Only.</td><td></td><td></td><td></td><td></td><td></td><td></td><td></td></tr>
          <tr class="r13"><th>7</th><td></td><td class="bx-l"></td><td></td><td class="bx-r"></td><td></td><td></td><td></td><td></td><td></td><td></td><td></td></tr>
          <tr class="r45"><th>8</th><td></td><td class="cur-name fill-yel bx-t bx-b bx-l bx-v">US Dollars</td><td class="amt fill-yel bx-t bx-b bx-v">USD 14,835.30</td><td class="words bx-t bx-b bx-r">US Dollars  Fourteen Thousand Eight Hundred and Thirty Five &amp; 30 Cents Only.</td><td></td><td></td><td></td><td></td><td></td><td></td><td></td></tr>
          <tr class="r13"><th>9</th><td></td><td class="bx-l"></td><td></td><td class="bx-r"></td><td></td><td></td><td></td><td></td><td></td><td></td><td></td></tr>
          <tr class="r45"><th>10</th><td></td><td class="cur-name fill-yel bx-t bx-b bx-l bx-v">Indian Rupees</td><td class="amt fill-yel bx-t bx-b bx-v">INR 1,043,053.02</td><td class="words bx-t bx-b bx-r">Indian Rupees One Million  Forty Three Thousand and Fifty Three &amp; 02 Paise Only.</td><td></td><td></td><td></td><td></td><td></td><td></td><td></td></tr>
          <tr class="r13"><th>11</th><td></td><td class="bx-l"></td><td></td><td class="bx-r"></td><td></td><td></td><td></td><td></td><td></td><td></td><td></td></tr>
          <tr class="r45"><th>12</th><td></td><td class="cur-name fill-yel bx-t bx-b bx-l bx-v">Bahraini Dinars</td><td class="amt fill-yel bx-t bx-b bx-v">BHD 5,578.095</td><td class="words bx-t bx-b bx-r">Bahraini Dinars  Five Thousand Five Hundred and Seventy Eight &amp; 095 Fils Only.</td><td></td><td></td><td></td><td></td><td></td><td></td><td></td></tr>
          <tr class="r17"><th>13</th><td></td><td></td><td></td><td></td><td></td><td></td><td></td><td></td><td></td><td></td><td></td></tr>
          <tr class="r17"><th>14</th><td></td><td></td><td></td><td></td><td></td><td></td><td></td><td></td><td></td><td></td><td></td></tr>
        </tbody>
      </table>
      <div class="vscroll">
        <div class="vscroll-head"></div>
        <div class="vscroll-dash"></div>
        <svg class="vscroll-up" width="8" height="5" viewBox="0 0 8 5"><path d="M4 0l4 5H0z" fill="#777"/></svg>
        <div class="vscroll-thumb"></div>
      </div>
      <svg class="note-arrow" width="70" height="30" viewBox="0 0 70 30"><path d="M68 2Q25 9 3 25M3 25l3.500-8M3 25l9 0" fill="none" stroke="#f4978e" stroke-width="1.400" stroke-linecap="round"/></svg>
      <div class="note-box">Formulas updated by <b>Abdul Rahman</b><br><b>Mohammed</b> to include other<br>currencies in absolute and rounded<br>figures. Many thanks!</div>
    </div>
  </div>
  <!-- side panel -->
  <div class="side-panel d-flex flex-column align-items-center">
    <div class="side-dash"></div>
    <div class="side-cell"><svg width="20" height="20" viewBox="0 0 20 20"><path class="ln" d="M1 1l18 6-7 3 6 7-2 2-6-7-3 7z"/></svg></div>
    <div class="side-cell"><svg width="20" height="20" viewBox="0 0 20 20"><path class="ln-soft" d="M1 5v14M5 1h14M18 1v0M15 5l2.500-3L20 5M17.500 4v8q0 2-2 2H5M8 11l-3 3 3 3"/></svg></div>
    <div class="side-cell"><svg width="20" height="18" viewBox="0 0 20 18"><circle class="ln-soft" cx="6" cy="4" r="3"/><circle class="ln-soft" cx="14" cy="14" r="3"/><path class="ln-soft" d="M0 4h3M9 4h11M0 14h11M17 14h3"/></svg></div>
    <div class="side-cell"><svg width="20" height="20" viewBox="0 0 20 20"><path class="ln" d="M3 4a9 9 0 1 1-2 6M1 2v4h4M10 5v5l4 4"/></svg></div>
    <div class="side-cell"><svg width="20" height="20" viewBox="0 0 20 20"><circle class="ln" cx="10" cy="10" r="9.300"/><text class="help-q" x="6" y="15">?</text></svg></div>
    <div class="side-cell side-cell-dots"><svg width="20" height="6" viewBox="0 0 20 6"><circle class="ln" cx="3" cy="3" r="2"/><circle class="ln" cx="10" cy="3" r="2"/><circle class="ln" cx="17" cy="3" r="2"/></svg></div>
  </div>
</div>
<script src="https://cdn.jsdelivr.net/npm/bootstrap@5.3.0/dist/js/bootstrap.bundle.min.js"></script>
</body>
</html>
